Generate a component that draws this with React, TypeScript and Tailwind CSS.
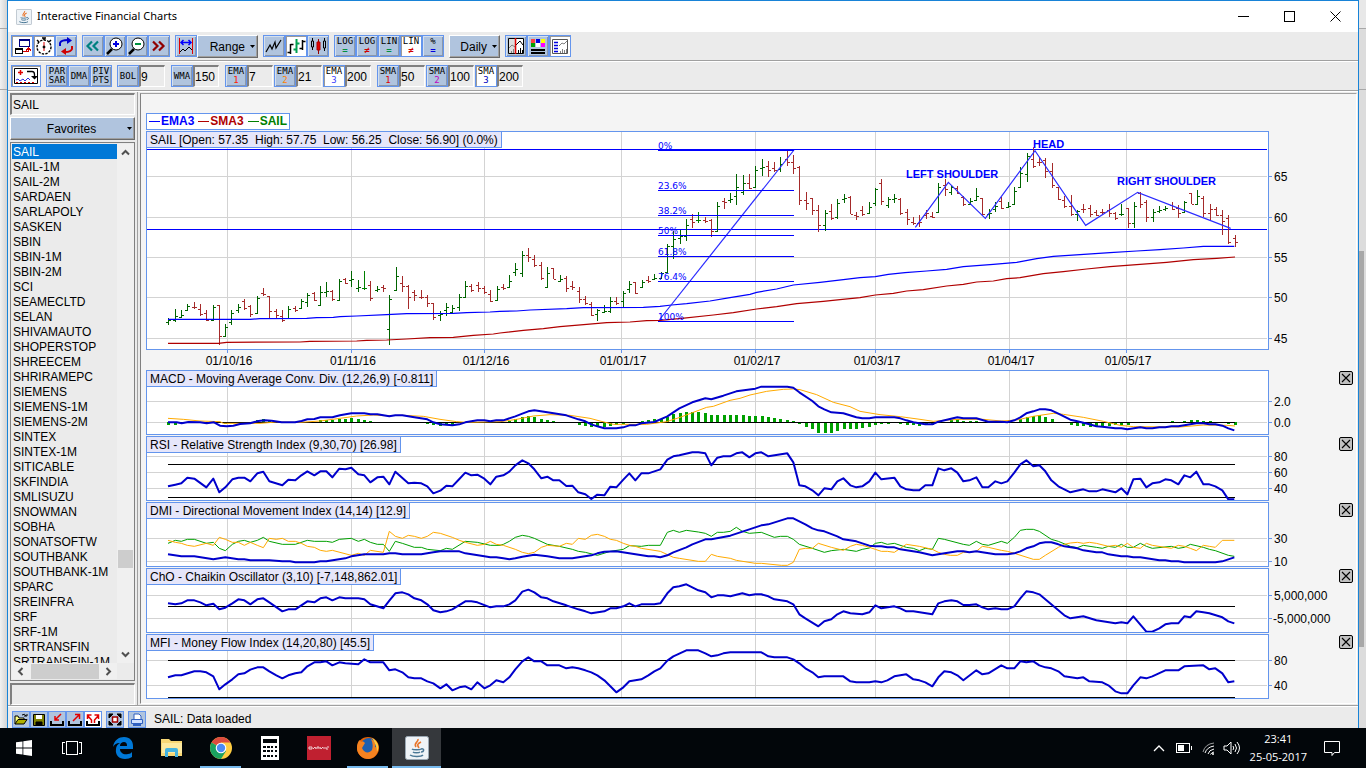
import React, { useState } from 'react';

type Section = string;
type Pt = [number, number];

// Chart geometry. Series are stored in thirds of a pixel, in three sections of 360px each.
const SECTION = 360;
const ORIGIN = 6;
const FIRST = 22;
const LAST = 1089;
const MONTHS: [number, string][] = [
  [81, '01/10/16'], [205, '01/11/16'], [338, '01/12/16'], [475, '01/01/17'],
  [609, '01/02/17'], [729, '01/03/17'], [863, '01/04/17'], [980, '01/05/17'],
];

const BLUE = '#0000cc';
const GREEN = '#00a000';
const ORANGE = '#ffaa00';

const barX = (i: number) => FIRST + Math.ceil(i * 6.31 - 0.1);
const row = (y: number, top: number) => Math.floor(y / 3) - top + 0.5;

const trace = (sections: Section[], top: number) =>
  sections
    .flatMap((s, k) => s.split(' ').map(p => p.split(',').map(Number) as Pt).map(([x, y]) => `${(x / 3 + k * SECTION - ORIGIN).toFixed(2)},${(y / 3 - top).toFixed(2)}`))
    .join(' ');

// high low open close colour
const BARS = `625 646 638 630 g;598 638 631 620 g;601 623 622 616 g;583 604 602 590 g;577 598 592 592 r;584 620 598 613 r;601 635 610 632 r;587 635 632 592 g;586 707 586 680 r;642 682 680 652 g;601 646 638 610 g;583 610 601 592 g;568 602 574 595 r;587 622 589 613 r;559 613 611 565 g;535 559 550 552 r;559 625 559 604 r;598 625 604 617 r;601 638 619 630 r;589 626 625 598 g;589 607 595 600 r;568 598 596 575 g;550 592 577 556 g;547 575 550 572 r;529 590 586 547 g;517 562 547 545 g;541 575 545 569 r;508 572 571 514 g;505 523 508 520 r;484 532 511 508 g;511 547 535 532 g;484 541 535 535 G;515 574 526 565 r;529 547 541 538 g;526 547 532 535 r;556 707 658 568 g;472 541 541 499 g;499 547 520 529 r;527 598 530 562 r;541 575 547 556 r;541 568 562 562 r;556 592 562 580 r;580 632 580 622 r;604 635 616 612 g;580 620 601 592 g;586 614 607 595 g;553 605 592 562 g;514 562 562 529 g;523 547 530 541 r;517 547 526 535 r;529 553 535 547 r;541 577 553 574 r;529 574 571 538 g;523 541 532 535 r;496 535 532 514 g;460 500 487 478 g;424 502 490 436 g;415 458 436 442 r;436 472 448 466 r;457 511 466 505 r;472 533 532 490 g;475 508 475 508 r;496 517 515 508 g;499 547 505 535 r;514 541 529 532 r;532 580 544 568 r;559 586 568 580 r;577 620 583 617 r;598 635 614 600 g;586 611 607 604 g;562 610 604 574 g;562 586 574 580 r;544 592 574 550 g;515 550 538 523 g;517 553 517 550 r;511 535 532 517 g;499 520 511 514 r;493 511 508 505 g;487 508 505 490 g;403 490 488 409 g;364 448 409 388 g;361 403 385 380 g;328 394 380 346 g;313 356 328 337 r;307 341 331 331 G;322 341 331 334 r;328 382 331 364 r;277 367 364 289 g;265 298 274 277 r;250 281 272 268 g;193 287 259 232 g;196 256 247 220 g;193 239 220 235 r;169 235 232 181 g;148 199 175 172 g;154 202 169 181 r;157 187 175 181 r;142 187 178 163 g;121 169 148 157 r;136 193 157 175 r;169 286 172 271 r;247 301 271 280 r;265 316 265 301 r;286 367 301 346 r;301 364 346 310 g;283 331 304 325 r;268 328 322 280 g;253 280 268 265 g;259 313 262 313 r;307 331 316 319 r;289 319 301 313 r;277 313 310 292 g;235 289 280 238 g;208 286 220 274 r;262 295 286 268 g;253 280 268 265 g;265 316 268 310 r;298 346 307 328 r;322 347 338 340 r;316 352 340 337 r;301 328 316 310 r;307 325 319 322 r;220 307 307 232 g;208 260 226 238 r;226 256 247 232 g;229 253 235 250 r;259 289 262 283 r;265 285 283 274 g;235 274 271 259 g;265 316 265 313 r;298 328 313 310 g;277 307 298 289 g;262 298 274 295 r;277 292 292 289 g;232 286 283 244 g;172 235 232 190 g;130 217 193 139 g;112 175 148 169 r;142 169 157 157 r;145 205 151 184 r;160 235 184 226 r;232 271 232 268 r;259 295 271 289 r;256 319 289 313 r;301 334 313 304 g;283 310 298 298 r;286 322 295 313 r;301 319 307 316 r;298 316 307 307 r;283 322 301 310 r;307 331 310 325 r;283 319 313 313 g;295 355 295 340 r;277 355 340 289 g;247 295 250 283 r;271 337 277 322 r;298 337 322 307 g;289 310 304 301 g;289 304 298 295 g;277 301 286 298 r;286 325 295 310 r;274 307 307 277 g;250 283 250 283 r;241 286 283 259 g;259 322 265 310 r;283 331 310 298 r;292 319 298 316 r;301 376 316 334 r;316 403 325 397 r;376 412 385 397 r`
  .split(';')
  .map(b => b.split(' '));

const EMA3 = [
  '84,628 330,628 360,626 500,625 530,623 580,622 600,620 650,618 740,614 800,611 940,610 980,608 1050,606',
  '0,604 50,603 90,600 200,596 250,593 430,592 480,589 515,585 560,581 630,573 690,563 750,553 770,547 830,537 880,525 960,517 1030,509',
  '0,503 46,500 85,493 135,488 200,483 260,478 310,470 400,463 470,457 530,446 580,439 660,434 750,428 830,423 900,419 970,414 1030,409 1123,409',
];
const SMA3 = [
  '84,700 235,700 260,697 480,696 510,694 650,693 680,691 740,690 800,687 870,683 940,682 1000,676 1060,672',
  '0,669 70,661 130,656 180,650 260,643 320,638 390,636 440,632 480,631 545,625 640,615 700,608 770,597 830,590 890,581 970,574 1020,569',
  '0,563 46,555 100,550 140,543 190,539 260,528 310,523 350,516 400,513 440,506 480,503 550,491 610,485 680,477 750,470 830,464 920,457 1000,449 1070,445 1125,441',
];
const PATTERN = ['166,352 265,217 376,325 525,122 677,346 833,247 1112,355'];

const HISTOGRAM = [
  -10, -9, -6, -4, 0, 0, 0, 0, -4, -6, -3, 0, 0, 0, 6, 9, 5, 0, 0, 0, 0, 0, 0, 0, 5, 6, 7, 10, 9, 12, 9, 6, 3, 0, 0, 0, 0, 0, 0, -4, -4, -7, -9, -13, -9, -8, -4,
  0, 0, 0, 0, 0, 0, 0, 4, 8, 16, 19, 16, 10, 6, 4, 0, 0, -4, -10, -13, -16, -14, -14, -13, -10, -5, 0, 0, 4, 6, 9, 10, 16, 24, 28, 30, 30, 30, 28, 22, 22, 22, 22, 22, 22,
  18, 18, 18, 16, 12, 9, 6, 3, -7, -16, -22, -32, -32, -32, -28, -22, -22, -22, -19, -16, -10, -7, -5, -4, -7, -10, -10, -13, -10, -10, 0, 0, 5, 8, 4, 4, 4, 0, -4, 0, -4,
  0, 0, 9, 16, 18, 20, 16, 10, 0, -4, -10, -13, -13, -16, -16, -13, -13, -10, -10, -10, -4, 0, 0, 0, 0, 0, 4, 0, 4, 7, 7, 4, 4, 0, 0, -7, -10,
];

interface Indicator {
  title: string;
  top: number;
  grid: [number, string][];
  levels: number[];
  lines: { color: string; width: number; data: Section[] }[];
  histogram?: boolean;
}

const INDICATORS: Indicator[] = [
  {
    title: 'MACD - Moving Average Conv. Div. (12,26,9) [-0.811]',
    top: 5,
    grid: [[109, '2.0'], [172, '0.0']],
    levels: [172],
    histogram: true,
    lines: [
      { color: ORANGE, width: 1, data: [
        '84,160 130,163 180,168 240,170 250,175 360,175 410,171 480,172 540,168 600,160 650,153 700,150 730,152 790,151 850,154 900,163 950,170 980,172 1080,170',
        '10,169 50,163 100,153 150,149 210,151 270,160 300,168 340,178 440,178 500,170 540,157 580,142 620,127 640,124 690,106 720,100 750,90 800,79 850,73 880,72 900,74 950,89 1000,112 1050,125',
        '0,139 60,149 121,155 180,163 220,169 250,166 300,163 370,163 424,168 470,165 520,154 580,145 610,148 670,157 730,169 780,181 820,185 960,186 1030,180 1100,181 1125,183',
      ] },
      { color: BLUE, width: 2, data: [
        '84,172 110,172 125,175 145,171 180,172 200,175 222,172 240,182 260,184 280,182 300,177 330,175 355,168 375,166 395,167 425,172 465,172 485,168 502,163 523,162 541,157 577,157 600,151 634,145 673,145 691,148 712,148 748,154 766,151 787,151 823,157 862,163 880,172 901,178 937,181 958,178 976,172 1012,166 1033,166 1051,169 1069,166',
        '10,166 46,154 67,146 85,139 103,136 142,142 199,151 235,163 256,169 274,178 292,184 313,190 349,190 370,187 388,181 406,181 424,175 463,171 481,163 502,154 538,130 577,112 616,100 634,103 670,92 709,79 766,71 784,65 862,65 880,68 898,82 937,108 955,124 973,133 994,142 1030,145 1069,157',
        '7,160 28,160 46,157 103,157 121,160 139,166 160,172 196,178 217,178 235,170 292,157 310,160 349,160 385,170 424,170 442,172 463,166 481,157 499,145 520,139 538,133 556,133 574,136 595,146 631,164 652,169 688,178 709,184 727,185 766,190 784,190 802,193 841,187 859,190 877,190 898,187 916,187 934,184 955,184 1009,175 1030,175 1048,178 1066,178 1087,182 1105,190 1123,196',
      ] },
    ],
  },
  {
    title: 'RSI - Relative Strength Index (9,30,70) [26.98]',
    top: 71,
    grid: [[274, '80'], [322, '60'], [370, '40']],
    levels: [298, 397],
    lines: [
      { color: BLUE, width: 2, data: [
        '84,364 106,359 124,355 142,338 163,341 199,367 220,341 238,382 256,367 277,343 295,338 313,338 331,349 352,325 370,320 388,349 427,361 445,344 466,346 484,331 502,319 523,331 541,319 559,319 577,337 598,311 616,313 634,308 655,328 673,331 691,352 712,337 730,335 748,358 766,320 805,355 823,353 844,355 862,364 880,385 901,377 919,362 937,364 958,342 976,323 994,331 1012,329 1033,341 1051,358 1069,335',
        '10,331 28,320 46,301 67,286 85,295 103,313 124,340 142,335 160,346 178,346 199,363 217,362 235,382 256,388 274,402 292,389 313,391 331,365 349,367 370,344 388,325 406,346 424,325 445,325 463,319 481,313 502,284 520,274 538,271 577,262 595,262 616,265 634,301 652,278 670,274 691,274 709,265 727,262 748,277 766,265 784,262 805,274 862,265 880,292 898,361 916,364 937,376 955,391 973,370 994,373 1012,349 1030,340 1051,361 1069,367',
        '7,364 28,349 46,323 64,343 103,338 121,364 139,373 160,376 178,376 196,361 217,361 235,310 253,316 274,310 292,323 310,349 328,346 349,337 367,367 385,367 406,349 424,355 442,349 463,323 481,298 499,286 520,304 538,301 556,319 574,346 595,364 631,382 670,373 688,379 709,379 727,373 766,382 784,370 802,388 820,343 841,341 859,367 877,355 898,352 916,343 934,346 955,358 973,331 991,337 1009,320 1030,358 1048,358 1066,364 1087,376 1105,403 1123,403',
      ] },
    ],
  },
  {
    title: 'DMI - Directional Movement Index (14,14) [12.9]',
    top: 137,
    grid: [[520, '30'], [589, '10']],
    levels: [],
    lines: [
      { color: GREEN, width: 1, data: [
        '84,535 106,526 124,529 142,523 163,523 199,535 220,532 238,550 256,557 277,538 295,529 313,526 331,532 352,526 370,517 388,529 427,538 466,538 502,526 523,529 559,529 577,532 598,523 634,520 655,529 673,523 691,532 712,538 730,538 748,559 766,529 787,535 823,547 844,547 862,553 901,557 919,550 937,553 976,529 1012,532 1051,541 1080,541',
        '10,538 28,529 46,517 67,511 85,514 103,520 142,538 178,544 217,553 235,559 256,562 292,571 331,559 370,553 388,542 424,544 445,541 481,541 502,502 520,496 538,502 559,496 595,501 616,505 634,514 652,502 670,502 691,499 709,487 727,499 748,505 784,502 823,517 841,514 862,514 880,523 898,538 937,550 973,562 994,557 1030,553 1069,559',
        '7,553 28,549 46,535 64,532 82,538 103,535 139,547 160,550 178,557 196,550 217,553 235,520 253,523 310,538 328,541 349,529 367,538 385,541 424,529 442,535 463,517 481,496 499,493 520,493 538,499 574,523 595,529 631,544 652,548 670,541 709,547 727,550 745,544 766,547 784,538 802,547 820,547 841,535 859,544 877,550 934,544 955,550 973,547 991,538 1030,547 1048,553 1066,557 1105,571 1123,574',
      ] },
      { color: ORANGE, width: 1, data: [
        '84,526 106,532 124,535 142,541 163,544 199,535 220,541 238,517 256,523 277,532 295,532 313,541 331,532 352,541 370,548 388,520 409,523 427,520 445,529 466,529 484,535 502,544 523,547 541,556 559,559 577,556 634,571 655,565 673,571 691,556 730,562 748,499 766,514 787,520 805,511 823,514 844,520 862,514 880,502 901,505 937,517 958,526 976,532 1012,541 1033,538 1051,529 1069,538',
        '10,541 46,553 67,562 85,566 103,562 124,547 142,541 178,544 199,535 217,538 235,520 256,523 274,511 292,508 313,514 331,523 349,526 370,535 388,541 406,544 424,550 481,559 520,577 538,580 595,589 616,589 634,568 652,574 691,580 709,586 766,595 784,595 844,601 862,601 880,592 898,553 916,550 937,550 955,535 994,547 1030,556 1051,544 1069,538',
        '7,541 28,547 46,553 64,559 82,559 103,562 121,550 139,538 178,544 217,553 235,562 253,568 271,571 292,571 310,562 328,562 349,559 367,544 385,547 424,556 442,559 463,565 520,583 538,583 556,571 595,547 613,538 631,534 652,532 670,535 688,532 709,535 745,544 766,541 784,547 802,535 820,547 841,550 859,535 877,541 934,550 955,541 973,544 991,550 1009,557 1030,541 1048,544 1066,547 1087,526 1123,526',
      ] },
      { color: BLUE, width: 2, data: [
        '84,568 124,574 163,574 220,583 256,577 295,583 313,583 331,586 388,586 427,589 450,589 466,592 523,592 541,589 559,589 616,580 634,574 673,568 730,568 748,565 766,565 787,568 844,568 880,562 901,559 958,559 976,565 1033,574 1051,577 1069,577',
        '10,580 28,583 46,580 67,575 103,569 142,574 178,580 217,580 274,571 292,565 313,560 349,559 445,574 463,574 481,577 502,571 520,562 559,547 577,538 616,523 634,523 691,512 748,493 784,481 805,478 862,460 880,460 916,478 937,490 955,496 973,499 1012,514 1030,523 1069,529',
        '7,535 28,542 46,544 64,544 82,547 103,547 121,553 178,562 217,571 235,568 292,559 310,559 328,562 349,559 367,562 406,568 442,568 463,565 481,559 499,550 520,544 538,535 556,532 574,532 595,538 613,544 652,550 670,556 709,562 727,562 745,568 784,574 802,574 820,577 841,577 898,586 916,586 934,589 955,589 973,592 1066,592 1087,589 1105,583 1123,577',
      ] },
    ],
  },
  {
    title: 'ChO - Chaikin Oscillator (3,10) [-7,148,862.01]',
    top: 203,
    grid: [[691, '5,000,000'], [760, '-5,000,000']],
    levels: [724],
    lines: [
      { color: BLUE, width: 2, data: [
        '84,715 106,718 124,715 142,706 163,706 181,712 199,721 220,716 238,733 256,728 277,715 295,703 313,706 331,718 352,703 370,700 388,712 427,739 445,733 466,733 484,721 502,709 523,712 541,700 559,697 577,706 598,697 616,700 655,700 673,703 691,718 730,730 748,707 766,685 787,682 805,688 823,700 844,706 862,718 880,736 901,742 919,739 937,733 976,709 994,709 1012,712 1051,727 1069,724',
        '10,724 28,718 46,706 67,680 85,674 103,682 124,697 142,700 160,709 199,721 235,733 256,739 274,745 313,739 331,730 349,730 370,724 388,715 406,724 424,718 463,718 481,715 502,685 520,667 538,664 559,658 595,676 616,682 634,697 652,691 670,691 691,694 727,685 748,691 766,688 784,688 805,694 823,703 862,709 880,718 898,748 916,760 955,784 973,769 994,763 1012,748 1030,739 1051,745',
        '7,748 28,742 46,721 64,730 103,724 121,730 139,739 160,739 217,748 235,715 253,709 274,706 292,709 310,720 328,720 349,718 367,727 385,733 406,730 424,733 442,733 463,724 481,700 499,679 520,682 538,688 613,751 631,760 670,754 709,766 766,775 784,772 802,775 820,754 859,800 877,800 898,790 916,778 934,775 955,775 973,754 991,757 1009,739 1030,742 1048,745 1087,757 1105,769 1123,775',
      ] },
    ],
  },
  {
    title: 'MFI - Money Flow Index (14,20,80) [45.5]',
    top: 269,
    grid: [[886, '80'], [961, '40']],
    levels: [886, 997],
    lines: [
      { color: BLUE, width: 2, data: [
        '84,937 106,931 124,931 163,919 181,919 199,922 220,934 238,973 256,958 277,943 295,928 313,925 331,914 352,907 370,907 388,919 409,931 427,940 445,931 466,925 484,922 502,904 523,892 541,892 559,889 577,901 598,892 616,895 655,898 673,883 691,892 730,892 748,916 766,913 787,922 805,937 823,940 844,940 862,949 880,955 901,970 919,958 937,976 958,967 976,964 994,973 1012,952 1033,970 1051,961 1069,946',
        '10,952 28,937 46,913 67,889 85,877 103,889 124,889 142,901 178,901 199,910 217,907 235,910 256,916 274,922 292,931 313,946 349,982 370,967 388,949 424,943 445,931 463,919 481,910 502,887 520,874 559,856 595,856 616,865 634,874 652,871 670,865 691,862 784,862 805,874 823,877 862,877 880,883 898,895 916,910 937,922 955,937 973,934 1030,934 1051,949 1069,952',
        '7,952 28,952 46,949 64,952 82,946 103,934 139,928 160,943 178,946 196,952 217,964 235,937 253,919 274,922 292,931 310,946 349,916 367,928 385,925 424,901 442,910 463,910 481,889 499,892 520,889 538,901 556,907 574,910 595,919 613,934 652,940 670,937 688,949 727,952 745,961 766,979 784,985 802,985 820,961 841,937 859,940 877,934 916,916 955,916 973,904 1030,901 1048,913 1066,910 1087,925 1105,952 1123,949',
      ] },
    ],
  },
];

const PRICE_GRID: [number, string][] = [[199, '65'], [322, '60'], [442, '55'], [563, '50'], [685, '45']];
const FIBS: [number, string][] = [[121, '0%'], [241, '23.6%'], [316, '38.2%'], [376, '50%'], [439, '61.8%'], [514, '76.4%'], [634, '100%']];
const PRICE_TOP = 21;

const SYMBOLS = [
  'SAIL', 'SAIL-1M', 'SAIL-2M', 'SARDAEN', 'SARLAPOLY', 'SASKEN', 'SBIN', 'SBIN-1M', 'SBIN-2M', 'SCI', 'SEAMECLTD', 'SELAN',
  'SHIVAMAUTO', 'SHOPERSTOP', 'SHREECEM', 'SHRIRAMEPC', 'SIEMENS', 'SIEMENS-1M', 'SIEMENS-2M', 'SINTEX', 'SINTEX-1M', 'SITICABLE',
  'SKFINDIA', 'SMLISUZU', 'SNOWMAN', 'SOBHA', 'SONATSOFTW', 'SOUTHBANK', 'SOUTHBANK-1M', 'SPARC', 'SREINFRA', 'SRF', 'SRF-1M',
  'SRTRANSFIN', 'SRTRANSFIN-1M',
];

/* ---------- chart ---------- */

const Grid: React.FC<{ rows: [number, string][]; top: number; height: number }> = ({ rows, top, height }) => (
  <g stroke="#d3d3d3" shapeRendering="crispEdges">
    {MONTHS.map(([x]) => <line key={x} x1={x + 0.5} x2={x + 0.5} y1={1} y2={height} />)}
    {rows.map(([y]) => <line key={y} x1={1} x2="100%" y1={row(y, top)} y2={row(y, top)} />)}
  </g>
);

const ValueAxis: React.FC<{ rows: [number, string][]; top: number }> = ({ rows, top }) => (
  <svg className="h-full w-[70px] shrink-0 overflow-visible text-[12px]" aria-hidden="true">
    {rows.map(([y, label]) => (
      <g key={label}>
        <line x1={0} x2={3} y1={row(y, top)} y2={row(y, top)} stroke="#6495ed" shapeRendering="crispEdges" />
        <text x={label.startsWith('-') ? 4 : 5} y={row(y, top) + 4.5}>{label}</text>
      </g>
    ))}
  </svg>
);

const PlotTitle: React.FC<{ children: React.ReactNode }> = ({ children }) => (
  <div className="absolute top-0 left-0 h-[17px] border border-[#6495ed] bg-[#e6e6fa] px-[3px] text-[12px] leading-[17px] whitespace-pre">{children}</div>
);

const PricePlot: React.FC = () => (
  <div className="flex h-[219px] pr-[14px]">
    <div className="relative min-w-0 flex-1 border border-[#6495ed] bg-white">
      <svg className="absolute -inset-px h-[218px] w-full" role="img" aria-label="SAIL daily price">
        <Grid rows={PRICE_GRID} top={PRICE_TOP} height={218} />
        <g stroke="#0000ff" shapeRendering="crispEdges">
          <line x1={1} x2="100%" y1={18.5} y2={18.5} />
          <line x1={1} x2="100%" y1={98.5} y2={98.5} />
        </g>
        <g shapeRendering="crispEdges">
          {BARS.map(([h, l, o, c, k], i) => {
            const x = barX(i) + 0.5;
            const lo = Math.floor(+l / 3) - PRICE_TOP;
            const hi = Math.floor(+h / 3) - PRICE_TOP;
            return (
              <path key={i} fill="none" stroke={k === 'r' ? '#a52a2a' : k === 'G' ? '#008000' : '#006400'}
                d={`M${x} ${hi}V${lo}M${x - 2.5} ${row(+o, PRICE_TOP)}H${x}M${x} ${row(+c, PRICE_TOP)}H${x + 2.5}`} />
            );
          })}
        </g>
        <polyline points={trace(EMA3, PRICE_TOP)} fill="none" stroke="#0000ff" strokeWidth={1.2} />
        <polyline points={trace(SMA3, PRICE_TOP)} fill="none" stroke="#b00000" strokeWidth={1.2} />
        <polyline points={trace(PATTERN, PRICE_TOP)} transform="translate(720 0)" fill="none" stroke="#2a2aff" strokeWidth={1.2} />
        <line x1={514} y1={188} x2={648} y2={19} stroke="#2a2aff" strokeWidth={1.2} />
        {FIBS.map(([y, label]) => (
          <g key={label}>
            <line x1={512} x2={648} y1={row(y, PRICE_TOP)} y2={row(y, PRICE_TOP)} stroke="#0000ff" shapeRendering="crispEdges" />
            <text x={512} y={row(y, PRICE_TOP) - 1.5} fill="#0000ff" className="font-['DejaVu_Sans'] text-[9px]">{label}</text>
          </g>
        ))}
        <g fill="#0000ff" className="text-[11px] font-bold">
          <text x={760} y={47}>LEFT SHOULDER</text>
          <text x={887} y={17}>HEAD</text>
          <text x={971} y={54}>RIGHT SHOULDER</text>
        </g>
      </svg>
      <div className="absolute -top-px -left-px">
        <PlotTitle>{'SAIL [Open: 57.35  High: 57.75  Low: 56.25  Close: 56.90] (0.0%)'}</PlotTitle>
      </div>
    </div>
    <ValueAxis rows={PRICE_GRID} top={PRICE_TOP} />
  </div>
);

const IndicatorPlot: React.FC<{ item: Indicator; onClose: () => void }> = ({ item, onClose }) => (
  <div className="flex h-[65px] items-start">
    <div className="relative h-full min-w-0 flex-1 border border-[#6495ed] bg-white">
      <svg className="absolute -inset-px h-[64px] w-full" role="img" aria-label={item.title}>
        <Grid rows={item.grid} top={item.top} height={64} />
        {item.histogram && (
          <g fill={GREEN} shapeRendering="crispEdges">
            {HISTOGRAM.map((v, i) => v !== 0 && <rect key={i} x={barX(i) - 1} width={3} y={v > 0 ? 52 - Math.round(v / 3) : 52} height={Math.round(Math.abs(v) / 3)} />)}
          </g>
        )}
        {item.levels.map(y => <line key={y} x1={FIRST} x2={LAST} y1={row(y, item.top)} y2={row(y, item.top)} stroke="#000" shapeRendering="crispEdges" />)}
        {item.lines.map((l, i) => <polyline key={i} points={trace(l.data, item.top)} fill="none" stroke={l.color} strokeWidth={l.width} strokeLinejoin="round" />)}
      </svg>
      <div className="absolute -top-px -left-px">
        <PlotTitle>{item.title}</PlotTitle>
      </div>
    </div>
    <ValueAxis rows={item.grid} top={item.top} />
    <button onClick={onClose} aria-label={`Close ${item.title.split(' ')[0]}`} className="mt-px flex size-[14px] items-center justify-center rounded-[2px] border border-black bg-[#c0c0c0]">
      <svg width="10" height="10" stroke="#000" strokeWidth="1.1"><path d="M1 1l8 8M9 1l-8 8" /></svg>
    </button>
  </div>
);

const DateAxis: React.FC = () => (
  <svg className="h-5 w-full text-[12px]" aria-hidden="true">
    {MONTHS.map(([x, label]) => (
      <g key={x}>
        <line x1={x + 0.5} x2={x + 0.5} y1={0} y2={3} stroke="#6495ed" shapeRendering="crispEdges" />
        <text x={x + 2} y={15} textAnchor="middle">{label}</text>
      </g>
    ))}
  </svg>
);

const Legend: React.FC = () => (
  <div className="mb-px flex h-[17px] w-fit items-center gap-[4px] border border-[#6495ed] bg-white px-[2px] text-[12px] leading-[17px] font-bold">
    <span className="flex items-center gap-px text-[#0000ff]"><i className="h-px w-[11px] bg-[#0000ff]" />EMA3</span>
    <span className="flex items-center gap-px text-[#b00000]"><i className="h-px w-[11px] bg-[#b00000]" />SMA3</span>
    <span className="flex items-center gap-px text-[#008000]"><i className="h-px w-[11px] bg-[#008000]" />SAIL</span>
  </div>
);

/* ---------- toolbar ---------- */

const ToolButton: React.FC<{ label: string; on?: boolean; wide?: boolean; children: React.ReactNode }> = ({ label, on, wide, children }) => (
  <button aria-label={label} title={label} aria-pressed={!!on}
    className={`flex h-[22px] shrink-0 items-center justify-center border border-[#6495ed] ${wide ? 'w-[30px]' : 'w-[22px]'} ${on ? 'bg-white shadow-[inset_1px_1px_0_#9a9a9a]' : 'bg-[#b0c4de] shadow-[inset_1px_1px_0_#d5e0ee,inset_-1px_-1px_0_#8a97ab]'}`}>
    {children}
  </button>
);

const Ico: React.FC<{ children: React.ReactNode; w?: number; smooth?: boolean }> = ({ children, w = 20, smooth }) => (
  <svg width={w} height={20} viewBox={`0 0 ${w} 20`} fill="none" stroke="#000" shapeRendering={smooth ? 'auto' : 'crispEdges'} className="shrink-0">{children}</svg>
);

const Caption: React.FC<{ top: string; bottom?: string; color?: string }> = ({ top, bottom, color = 'text-black' }) => (
  <span className="flex flex-col items-center font-['DejaVu_Sans_Mono'] text-[9px] leading-[9px] text-black">
    <span>{top}</span>
    {bottom && <span className={color}>{bottom}</span>}
  </span>
);

const Drop: React.FC<{ children: React.ReactNode; className?: string }> = ({ children, className = '' }) => (
  <button className={`flex h-[23px] items-center justify-end gap-[5px] border border-t-white border-r-[#696969] border-b-[#696969] border-l-white bg-[#b0c4de] pr-[2px] text-[12px] shadow-[inset_-1px_-1px_0_#a0a0a0] ${className}`}>
    {children}
    <svg width="5" height="3" className="shrink-0"><path d="M0 0h5L2.5 3z" /></svg>
  </button>
);

const Period: React.FC<{ name: string; value: string; num?: string; color?: string; on?: boolean }> = ({ name, value, num, color, on }) => (
  <div className="flex">
    <ToolButton label={`${name}${num ?? ''}`} on={on}><Caption top={name} bottom={num} color={color} /></ToolButton>
    <input aria-label={`${name}${num ?? ''} period`} defaultValue={value}
      className="h-[22px] w-[26px] border border-t-2 border-l-2 border-t-[#808080] border-r-white border-b-white border-l-[#808080] bg-[#ebebeb] text-[12px] outline-none" />
  </div>
);

const Magnifier: React.FC<{ color: string; plus?: boolean }> = ({ color, plus }) => (
  <Ico smooth>
    <path d="M7 13L2 18" strokeWidth="2.5" />
    <circle cx="11" cy="8" r="6" fill="#fff" />
    <path d={plus ? 'M8 8h6M11 5v6' : 'M8 8h6'} stroke={color} strokeWidth="2" />
  </Ico>
);

const Toolbar: React.FC = () => (
  <div className="flex h-[30px] items-start gap-[5px] border-b border-b-white bg-[#ebebeb] pt-[3px] pl-[3px] shadow-[inset_0_-1px_0_#a0a0a0]">
    <div className="flex">
      <ToolButton label="Detach" on>
        <Ico><path d="M7.500 3.500h10v7h-10z" stroke="#000080" fill="#fff" /><path d="M7 4.500h11" stroke="#000080" /><path d="M3.500 12.500h7v5h-7z" /><path d="M3 13.500h8" /><path d="M11 15.500h5.500V12M14 14.500l2.500-2.500 2.500 2.500" stroke="#d00000" /></Ico>
      </ToolButton>
      <ToolButton label="Auto refresh" on>
        <Ico smooth><circle cx="10" cy="11" r="7" fill="#fff" strokeWidth="1.4" strokeDasharray="2.4 1.2" /><path d="M10 4V2M8 2h4M3 4l2 2M17 4l-2 2" strokeWidth="1.5" /><path d="M10 6v9" stroke="#e00000" /><circle cx="10" cy="11" r="1" fill="#000" /></Ico>
      </ToolButton>
      <ToolButton label="Refresh">
        <Ico smooth><path d="M4 10V7q1-3 8-3" stroke="#0000d0" strokeWidth="2" /><path d="M11 1l5 3.500-5 3.500z" fill="#0000d0" stroke="none" /><path d="M16 10v3q-1 3-7 3" stroke="#d00000" strokeWidth="2" /><path d="M10 12l-5 3.500 5 3.500z" fill="#d00000" stroke="none" /></Ico>
      </ToolButton>
    </div>
    <div className="flex">
      <ToolButton label="Scroll left"><Ico smooth><path d="M9 5.500L4.500 10 9 14.500M15 5.500L10.500 10l4.500 4.500" stroke="#008080" strokeWidth="2.2" /></Ico></ToolButton>
      <ToolButton label="Zoom in"><Magnifier color="#0000e0" plus /></ToolButton>
      <ToolButton label="Zoom out"><Magnifier color="#009040" /></ToolButton>
      <ToolButton label="Scroll right"><Ico smooth><path d="M4 5.500L8.500 10 4 14.500M10 5.500l4.500 4.500-4.500 4.500" stroke="#900000" strokeWidth="2.2" /></Ico></ToolButton>
    </div>
    <div className="flex">
      <ToolButton label="Fit range"><Ico smooth><path d="M3.500 2v16M16.500 2v16" stroke="#e00000" /><path d="M5 6.500h10M7.500 4L5 6.500 7.500 9M12.500 4L15 6.500 12.500 9" stroke="#0000ff" strokeWidth="1.5" /><path d="M4 16l3-3 2 2 4-4 3 3" /></Ico></ToolButton>
      <Drop className="w-[61px]">Range</Drop>
    </div>
    <div className="flex">
      <ToolButton label="Line"><Ico smooth><path d="M2 16l4-7 2 4 3-7 1 6 5-8" strokeWidth="1.2" /></Ico></ToolButton>
      <ToolButton label="OHLC bars" on><Ico smooth><path d="M4.500 8v10M1.500 16.500h3M4.500 8.500h3M16.500 4v10M13.500 12.500h3M16.500 5.500h3" strokeWidth="1.5" /><path d="M10.500 3v14M7.500 13.500h3M10.500 7.500h3" stroke="#00a050" strokeWidth="2" /></Ico></ToolButton>
      <ToolButton label="Candles"><Ico smooth><path d="M4.500 2v3M4.500 11v3M16.500 2v3M16.500 12v3M3.500 5h2v6h-2zM15.500 5h2v7h-2z" /><path d="M10.500 3v15" stroke="#900000" /><path d="M9 6h3v8H9z" fill="#e00000" stroke="#b00000" /></Ico></ToolButton>
    </div>
    <div className="flex">
      <ToolButton label="Log equal"><Caption top="LOG" bottom="=" color="text-[#009040] font-bold" /></ToolButton>
      <ToolButton label="Log free"><Caption top="LOG" bottom="≠" color="text-[#d00000] font-bold" /></ToolButton>
      <ToolButton label="Linear equal"><Caption top="LIN" bottom="=" color="text-[#009040] font-bold" /></ToolButton>
      <ToolButton label="Linear free" on><Caption top="LIN" bottom="≠" color="text-[#d00000] font-bold" /></ToolButton>
      <ToolButton label="Percent"><Caption top="%" bottom="=" color="text-[#0000e0] font-bold" /></ToolButton>
    </div>
    <Drop className="w-[51px]">Daily</Drop>
    <div className="flex">
      <ToolButton label="Crosshair"><Ico smooth><path d="M2.500 2.500h15v15h-15z" fill="#ddd" /><path d="M10.500 3v14h6.500V3z" fill="#fff" stroke="none" /><path d="M3 12l3-3 3 2M5.500 17v-2M7.500 17v-4" stroke="#808080" /><path d="M10 9l4-4 3 4M12.500 17v-3M14.500 17v-5M16.500 17v-3" /><path d="M9.500 2v16" stroke="#e00000" strokeWidth="1.500" /></Ico></ToolButton>
      <ToolButton label="Colours">
        <Ico><g stroke="none"><path d="M3 3h4v4H3z" fill="#ff4040" /><path d="M8 3h4v4H8z" fill="#0000e0" /><path d="M13 3h4v4h-4z" fill="#ffff00" /><path d="M3 7h4v4H3z" fill="#00a000" /><path d="M8 7h4v4H8z" fill="#fff" /><path d="M13 7h4v4h-4z" fill="#ff00ff" /></g><path d="M3 14h14M3 17h14" strokeWidth="2" /></Ico>
      </ToolButton>
      <ToolButton label="Panels" on><Ico smooth><path d="M2.500 3.500h15v14h-15z" stroke="#555" /><path d="M4 6.500h4M4 9.500h4M4 12.500h4M4 15.500h4" stroke="#0000e0" strokeWidth="1.5" /><path d="M9 10l3-3 2 1 3-3M10.500 17v-2M12.500 17v-4M14.500 17v-3M16.500 17v-4" stroke="#808080" /></Ico></ToolButton>
    </div>
  </div>
);

const IndicatorBar: React.FC = () => (
  <div className="flex h-[30px] items-start gap-[5px] border-b border-b-white bg-[#ebebeb] pt-[3px] pl-[3px] shadow-[inset_0_-1px_0_#a0a0a0]">
    <ToolButton label="Indicators" wide on>
      <Ico w={26} smooth><path d="M1.500 2.500h23v15h-23z" fill="#fff" /><path d="M5 6.500h5M7.500 4v5" stroke="#e00000" strokeWidth="1.5" /><path d="M14 5.500h5q2.500 0 2.500 3V11" strokeWidth="1.3" /><path d="M18 10h7l-3.500 3.500z" fill="#000" stroke="none" /><path d="M3 14l2-1 2 2 3-2 2 2 3-3 2 2" stroke="#3030e0" /><path d="M3 16.500h18" stroke="#e00000" strokeDasharray="2 2" /></Ico>
    </ToolButton>
    <div className="flex">
      <ToolButton label="Parabolic SAR"><Caption top="PAR" bottom="SAR" /></ToolButton>
      <ToolButton label="DMA"><Caption top="DMA" /></ToolButton>
      <ToolButton label="Pivot points"><Caption top="PIV" bottom="PTS" /></ToolButton>
    </div>
    <div className="flex gap-[6px]">
      <Period name="BOL" value="9" />
      <Period name="WMA" value="150" />
      <div className="flex gap-px">
        <Period name="EMA" num="1" value="7" color="text-[#ff2000]" />
        <Period name="EMA" num="2" value="21" color="text-[#ff8000]" />
        <Period name="EMA" num="3" value="200" color="text-[#4040ff]" on />
      </div>
      <div className="flex gap-px">
        <Period name="SMA" num="1" value="50" color="text-[#e00000]" />
        <Period name="SMA" num="2" value="100" color="text-[#c000c0]" />
        <Period name="SMA" num="3" value="200" color="text-[#0000c0]" on />
      </div>
    </div>
  </div>
);

/* ---------- sidebar ---------- */

const SUNKEN = 'border border-t-2 border-l-2 border-t-[#808080] border-r-white border-b-white border-l-[#808080] bg-[#ebebeb]';

const Arrow: React.FC<{ d: string }> = ({ d }) => (
  <svg width="9" height="9" viewBox="0 0 9 9" fill="none" stroke="#505050" strokeWidth="2"><path d={d} /></svg>
);

const Sidebar: React.FC<{ selected: string; onSelect: (s: string) => void }> = ({ selected, onSelect }) => (
  <aside className="flex w-[130px] shrink-0 flex-col gap-[2px] border-r border-[#a0a0a0] bg-[#ebebeb] pt-px pr-[2px] pb-px pl-[2px] text-[12px]">
    <input aria-label="Symbol" value={selected} readOnly className={`h-[22px] w-full shrink-0 pl-px outline-none ${SUNKEN}`} />
    <Drop className="w-full shrink-0"><span className="flex-1 pl-[10px]">Favorites</span></Drop>
    <div className="flex min-h-0 flex-1 flex-col border border-[#808080] bg-[#ebebeb] py-px pl-px">
      <div className="flex min-h-0 flex-1">
        <ul className="min-w-0 flex-1 overflow-hidden">
          {SYMBOLS.map(s => (
            <li key={s} className="h-[15px]">
              <button onClick={() => onSelect(s)} className={`block h-[15px] w-full overflow-hidden pl-px text-left leading-[17px] whitespace-nowrap ${s === selected ? 'bg-[#0078d7] text-white' : ''}`}>{s}</button>
            </li>
          ))}
        </ul>
        <div className="flex w-[17px] flex-col items-center justify-between bg-[#f0f0f0] py-1">
          <Arrow d="M1 6.5L4.5 3 8 6.5" />
          <div className="mt-auto mb-[82px] h-[18px] w-[15px] bg-[#cdcdcd]" />
          <Arrow d="M1 2.5L4.5 6 8 2.5" />
        </div>
      </div>
      <div className="mr-[17px] flex h-[16px] items-center justify-between bg-[#f0f0f0] px-1">
        <Arrow d="M6.5 1L3 4.5 6.5 8" />
        <div className="h-[15px] w-[68px] bg-[#cdcdcd]" />
        <Arrow d="M2.5 1L6 4.5 2.5 8" />
      </div>
    </div>
    <div className={`h-[22px] shrink-0 ${SUNKEN}`} />
  </aside>
);

/* ---------- status bar ---------- */

const Small: React.FC<{ label: string; on?: boolean; children: React.ReactNode }> = ({ label, on, children }) => (
  <button aria-label={label} className={`flex h-[17px] w-[18px] items-center justify-center border border-[#6495ed] ${on ? 'bg-white' : 'bg-[#b0c4de]'}`}>
    <svg width="16" height="15" viewBox="0 0 16 15" fill="none" stroke="#000">{children}</svg>
  </button>
);

const StatusBar: React.FC = () => (
  <footer className="flex h-[22px] shrink-0 items-end gap-[4px] border-t border-white bg-[#ebebeb] pl-[4px] shadow-[0_-1px_0_#a0a0a0]">
    <div className="flex">
      <Small label="Open"><path d="M2 12V4h3l1 2h5v2" fill="#ffff80" /><path d="M2 12l3-4.500h9L11 12z" fill="#b0b000" /><path d="M9 3q3-2 4 1M11 4h3V2" /></Small>
      <Small label="Save"><path d="M2.500 2.500h11v11h-11z" fill="#808000" /><path d="M5 3h6v4H5z" fill="#fff" stroke="none" /><path d="M5 10h6v3H5z" fill="#000" /></Small>
      <Small label="Import"><path d="M2 9v4h12V9" strokeWidth="2" /><path d="M12 2L6 8M6 4v4h4" stroke="#e00000" strokeWidth="1.500" /></Small>
      <Small label="Export"><path d="M2 9v4h12V9" strokeWidth="2" /><path d="M6 9l6-6M8 2.500h4.500V7" stroke="#e00000" strokeWidth="1.500" /></Small>
      <Small label="Share" on><path d="M2 9v4h12V9" strokeWidth="2" /><path d="M6.500 11V8L3 4M9.500 11V8L13 4M2.500 7V3h4M9.500 3h4v4" stroke="#e00000" strokeWidth="1.500" /></Small>
    </div>
    <Small label="Full screen"><path d="M2 2h4L2 6zM14 2h-4l4 4zM2 13h4L2 9zM14 13h-4l4-4z" fill="#000" /><path d="M5.500 5h5v5h-5z" fill="#fff" stroke="#a00000" strokeWidth="1.500" /></Small>
    <Small label="Print"><path d="M5 7V2h5l2 2v3" fill="#fff" stroke="#3060c0" /><path d="M2.500 7.500h11v4h-11z" fill="#d0e0ff" stroke="#3060c0" /><path d="M4 13h8" stroke="#3060c0" strokeWidth="2" /></Small>
    <span role="status" className="pl-[4px] text-[12px] leading-[17px]">SAIL: Data loaded</span>
  </footer>
);

/* ---------- desktop ---------- */

const JavaIcon: React.FC<{ size: number }> = ({ size }) => (
  <svg width={size} height={size} viewBox="0 0 24 24" fill="none">
    <rect x="0.5" y="0.5" width="23" height="23" rx="2" fill="#eef3f7" stroke="#9aa8b4" />
    <path d="M13 3c1 3-5 4-2 8M16 6c-4 2-4 3-2 6" stroke="#e8762c" strokeWidth="1.6" />
    <path d="M7 13c1 1 8 1 9 0M8 16c1 1 6 1 7 0M16 13c4-1 3 3 0 3M5 19c3 2 11 2 13 0" stroke="#4a7896" strokeWidth="1.5" />
  </svg>
);

const TitleBar: React.FC = () => (
  <header className="flex h-[31px] shrink-0 items-center bg-white pl-[8px]">
    <JavaIcon size={16} />
    <h1 className="pl-[5px] font-['Noto_Sans'] text-[11px]">Interactive Financial Charts</h1>
    <div className="ml-auto flex">
      <button aria-label="Minimize" className="flex w-[46px] justify-center"><svg width="11" height="11" shapeRendering="crispEdges"><path d="M0 5.5h11" stroke="#000" /></svg></button>
      <button aria-label="Maximize" className="flex w-[46px] justify-center"><svg width="11" height="11" shapeRendering="crispEdges"><path d="M.5.5h10v10H.5z" fill="none" stroke="#000" /></svg></button>
      <button aria-label="Close" className="flex w-[46px] justify-center"><svg width="11" height="11"><path d="M.5.5l10 10M10.5.5l-10 10" stroke="#000" /></svg></button>
    </div>
  </header>
);

const Task: React.FC<{ label: string; running?: boolean; active?: boolean; narrow?: boolean; children: React.ReactNode }> = ({ label, running, active, narrow, children }) => (
  <button aria-label={label} className={`relative flex h-full items-center justify-center ${narrow ? 'w-[48px]' : 'w-[49px]'} ${active ? 'bg-[#35383c]' : ''}`}>
    {children}
    {(running || active) && <span className={`absolute bottom-0 h-[2px] bg-[#76b9ed] ${active ? 'inset-x-0' : 'inset-x-[4px]'}`} />}
  </button>
);

const Taskbar: React.FC = () => (
  <nav className="flex h-[40px] shrink-0 items-center bg-[#02060a] text-white">
    <Task label="Start" narrow><svg width="16" height="16" fill="#fff"><path d="M0 2.300l6.500-.9v6.200H0zM7.300 1.300L16 0v7.600H7.300zM0 8.400h6.500v6.200L0 13.700zM7.300 8.400H16V16l-8.700-1.200z" /></svg></Task>
    <Task label="Task view" narrow><svg width="20" height="14" fill="none" stroke="#fff" shapeRendering="crispEdges"><path d="M4.500.5h11v13h-11zM3 1.500H.5v11H3M17 1.500h2.500v11H17" /></svg></Task>
    <div className="ml-[2px] flex h-full">
      <Task label="Edge">
        <svg width="22" height="22" viewBox="0 0 22 22"><path d="M1 10C2 3 7 0 12 0c6 0 9 4 9 9v3H8c0 4 4 6 8 5 2 0 3-1 4-2v5c-2 1-4 2-7 2-6 0-10-4-9-10 0-3 2-5 4-6-4 0-6 2-7 4zm7-1h7c0-3-1-4-3-4S8 6 8 9z" fill="#0078d7" /></svg>
      </Task>
      <Task label="File Explorer">
        <svg width="22" height="20" viewBox="0 0 22 20"><path d="M0 1h8l2 2h11v15H0z" fill="#f8d775" /><path d="M1 5h20v10H1z" fill="#fde9a0" /><path d="M4 19v-7q0-2 2-2h9q2 0 2 2v7h-3v-5H7v5z" fill="#45b3e0" /></svg>
      </Task>
      <Task label="Chrome" running>
        <svg width="22" height="22" viewBox="0 0 22 22"><circle cx="11" cy="11" r="11" fill="#ffcd42" /><path d="M11 11L1.500 5.500A11 11 0 0 1 20.500 5.500H11z" fill="#dd4b3e" /><path d="M11 11L1.500 5.500A11 11 0 0 0 11 22l5-8z" fill="#1aa260" /><circle cx="11" cy="11" r="5.300" fill="#fff" /><circle cx="11" cy="11" r="4.200" fill="#4c8bf5" /></svg>
      </Task>
      <Task label="Calculator">
        <svg width="18" height="24" viewBox="0 0 18 24" shapeRendering="crispEdges"><path d="M0 0h18v24H0z" fill="#fff" /><path d="M2 3h14v4H2z" fill="#02060a" /><g fill="#02060a"><path d="M2 10h3v2H2zM6 10h3v2H6zM10 10h2v2h-2zM14 10h2v2h-2zM2 14h3v2H2zM6 14h3v2H6zM10 14h2v2h-2zM14 14h2v2h-2zM2 19h3v2H2zM6 19h3v2H6zM10 19h2v2h-2zM14 19h2v2h-2z" /></g></svg>
      </Task>
      <Task label="Karvy">
        <svg width="24" height="24" viewBox="0 0 24 24"><path d="M0 0h24v24H0z" fill="#c02030" /><path d="M2 11h3v2H2zM6 13l2-2 1 2M10 13v-2h2v2M13 11l1 2 2-2M17 13v-2M19 11v2h2M20 11h2" fill="none" stroke="#f0d0d4" /></svg>
      </Task>
      <Task label="Firefox" running>
        <svg width="22" height="22" viewBox="0 0 22 22"><circle cx="11" cy="11" r="11" fill="#e66000" /><circle cx="12" cy="9" r="8" fill="#1f5fae" /><path d="M14 2c4 2 5 5 4 8 1 0 2 1 3-1 1 5-2 12-9 13C5 22 0 17 0 11c0-4 1-7 3-8l1 2c2-1 3 0 4 1-1 2-2 3-3 5 2 5 7 6 10 2 1-3 1-7-1-11z" fill="#f58220" /><path d="M15 1c6 3 8 9 5 14 0-5-2-9-5-14z" fill="#ffcb3c" /></svg>
      </Task>
      <Task label="Interactive Financial Charts" active><JavaIcon size={24} /></Task>
    </div>
    <div className="ml-auto flex items-center pr-[25px]">
      <svg width="12" height="7" fill="none" stroke="#fff" strokeWidth="1.3" className="mr-[11px]"><path d="M1 6l5-5 5 5" /></svg>
      <svg width="16" height="10" fill="none" stroke="#fff" shapeRendering="crispEdges" className="mr-[10px]"><path d="M.5.5h13v9H.5zM15 3v4" /><path d="M2 2h6v6H2z" fill="#fff" stroke="none" /></svg>
      <svg width="13" height="13" fill="none" stroke="#fff" className="mr-[8px]"><path d="M1 10Q3 2 12 1" opacity=".6" /><path d="M3 11Q5 5 12 4M6 12q1-4 6-5M8.5 12.5q1-2 3.500-2.500" /><circle cx="11" cy="12" r="1" fill="#fff" stroke="none" /></svg>
      <svg width="18" height="14" fill="none" stroke="#fff" className="mr-[9px]"><path d="M1 5h3l4-4v12L4 9H1zM10 5q1.500 2 0 4M12 3q3 4 0 8M14 1q5 6 0 12" /></svg>
      <div className="flex flex-col items-center font-['Open_Sans'] text-[11px] leading-[18px]">
        <span>23:41</span>
        <span>25-05-2017</span>
      </div>
      <button aria-label="Notifications" className="ml-[17px]"><svg width="17" height="17" fill="none" stroke="#fff"><path d="M.5 1.500h15v11h-5l-2.500 3v-3H.5z" /></svg></button>
    </div>
  </nav>
);

const App: React.FC = () => {
  const [symbol, setSymbol] = useState('SAIL');
  const [panels, setPanels] = useState(INDICATORS);

  return (
    <div className="flex h-screen flex-col overflow-hidden bg-[#f0f0f0] font-['Liberation_Sans',sans-serif] text-black">
      <div className="flex min-h-0 flex-1">
        <div className="flex w-[7px] shrink-0 flex-col bg-gradient-to-r from-[#f2f2f2] to-[#d4d4d4]">
          <div className="h-[29px] border-b border-[#a8a8a8]" />
          <div className="h-[61px] border-b border-[#a8a8a8]" />
        </div>
        <main className="flex min-w-0 flex-1 flex-col border-x border-t border-[#1883d7] bg-[#ebebeb]">
          <TitleBar />
          <Toolbar />
          <IndicatorBar />
          <div className="flex min-h-0 flex-1">
            <Sidebar selected={symbol} onSelect={setSymbol} />
            <section className="mt-px mr-px mb-[2px] ml-[2px] min-w-0 flex-1 border border-t-[#a0a0a0] border-r-white border-b-white border-l-[#808080] bg-[#f4f4f4] pt-[19px] pr-[3px] pl-[5px]">
              <Legend />
              <PricePlot />
              <DateAxis />
              <div className="flex flex-col gap-px">
                {panels.map(p => <IndicatorPlot key={p.title} item={p} onClose={() => setPanels(list => list.filter(x => x !== p))} />)}
              </div>
            </section>
          </div>
          <StatusBar />
        </main>
        <div className="flex w-[7px] shrink-0 flex-col bg-[#dcdcdc]">
          <div className="h-[29px] border-b border-[#a8a8a8] bg-[#e8e8e8]" />
          <div className="h-[61px] border-b border-[#a8a8a8]" />
          <div className="mt-[161px] h-[396px] w-[5px] bg-[#a8a8a8]" />
        </div>
      </div>
      <Taskbar />
    </div>
  );
};

export default App;
